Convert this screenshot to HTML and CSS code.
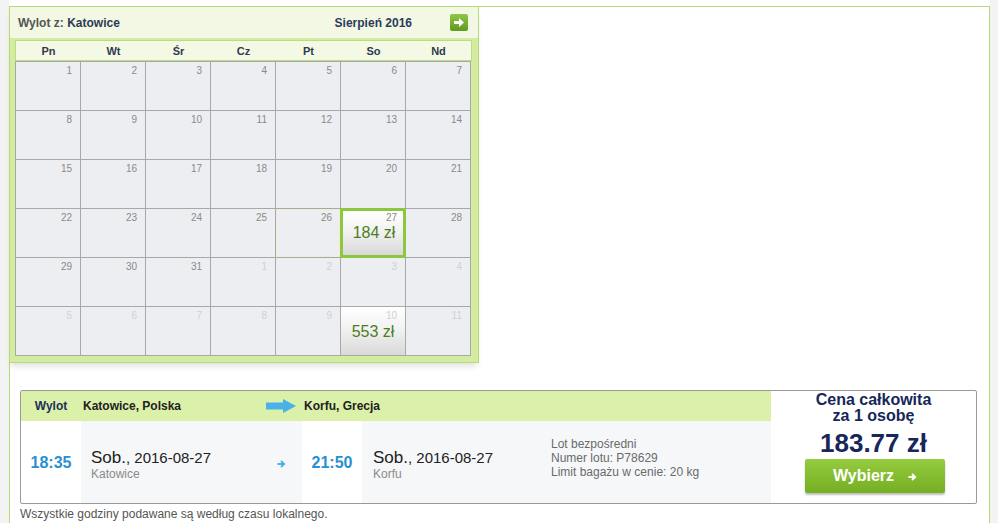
FILE: index.html
```html
<!DOCTYPE html>
<html lang="pl">
<head>
<meta charset="utf-8">
<title>Wylot</title>
<link rel="stylesheet" href="styles.css">
</head>
<body>
<div class="page">
  <div class="frame">
    <div class="calendar">
      <div class="cal-head">
        <div class="from"><span class="from-label">Wylot z:</span> <span class="from-city">Katowice</span></div>
        <div class="month">Sierpień 2016</div>
        <div class="next-btn"><svg width="18" height="17" viewBox="0 0 18 17"><polygon points="4,7 9,7 9,4 14,8.5 9,13 9,10 4,10" fill="#fff"/></svg></div>
      </div>
      <div class="cal-body">
        <div class="daynames">
          <div>Pn</div><div>Wt</div><div>Śr</div><div>Cz</div><div>Pt</div><div>So</div><div>Nd</div>
        </div>
        <div class="grid">
          <div class="cell"><span class="num">1</span></div>
          <div class="cell"><span class="num">2</span></div>
          <div class="cell"><span class="num">3</span></div>
          <div class="cell"><span class="num">4</span></div>
          <div class="cell"><span class="num">5</span></div>
          <div class="cell"><span class="num">6</span></div>
          <div class="cell"><span class="num">7</span></div>
          <div class="cell"><span class="num">8</span></div>
          <div class="cell"><span class="num">9</span></div>
          <div class="cell"><span class="num">10</span></div>
          <div class="cell"><span class="num">11</span></div>
          <div class="cell"><span class="num">12</span></div>
          <div class="cell"><span class="num">13</span></div>
          <div class="cell"><span class="num">14</span></div>
          <div class="cell"><span class="num">15</span></div>
          <div class="cell"><span class="num">16</span></div>
          <div class="cell"><span class="num">17</span></div>
          <div class="cell"><span class="num">18</span></div>
          <div class="cell"><span class="num">19</span></div>
          <div class="cell"><span class="num">20</span></div>
          <div class="cell"><span class="num">21</span></div>
          <div class="cell"><span class="num">22</span></div>
          <div class="cell"><span class="num">23</span></div>
          <div class="cell"><span class="num">24</span></div>
          <div class="cell"><span class="num">25</span></div>
          <div class="cell hover"><span class="num">26</span></div>
          <div class="cell price selected"><span class="num">27</span><span class="amount">184 zł</span></div>
          <div class="cell"><span class="num">28</span></div>
          <div class="cell"><span class="num">29</span></div>
          <div class="cell"><span class="num">30</span></div>
          <div class="cell"><span class="num">31</span></div>
          <div class="cell other"><span class="num">1</span></div>
          <div class="cell other"><span class="num">2</span></div>
          <div class="cell other"><span class="num">3</span></div>
          <div class="cell other"><span class="num">4</span></div>
          <div class="cell other"><span class="num">5</span></div>
          <div class="cell other"><span class="num">6</span></div>
          <div class="cell other"><span class="num">7</span></div>
          <div class="cell other"><span class="num">8</span></div>
          <div class="cell other"><span class="num">9</span></div>
          <div class="cell other price"><span class="num">10</span><span class="amount">553 zł</span></div>
          <div class="cell other"><span class="num">11</span></div>
        </div>
      </div>
    </div>

    <div class="flight">
      <div class="flight-main">
        <div class="flight-head">
          <div class="col-time head-label">Wylot</div>
          <div class="col-date head-city">
            <span>Katowice, Polska</span>
            <svg class="big-arrow" width="30" height="14" viewBox="0 0 30 14"><polygon points="0,3.5 17,3.5 17,0 30,7 17,14 17,10.5 0,10.5" fill="#4ab2e6"/></svg>
          </div>
          <div class="col-time2 head-city dest">Korfu, Grecja</div>
        </div>
        <div class="flight-body">
          <div class="col-time time">18:35</div>
          <div class="col-date grey">
            <div class="when">
              <div class="date"><span class="day">Sob.</span>, 2016-08-27</div>
              <div class="place">Katowice</div>
            </div>
            <svg class="small-arrow" width="9" height="8" viewBox="0 0 9 8"><path d="M0.5 4 H7 M4 1 L7.2 4 L4 7" fill="none" stroke="#4ab2e6" stroke-width="1.8"/></svg>
          </div>
          <div class="col-time time">21:50</div>
          <div class="col-rest grey">
            <div class="when when2">
              <div class="date"><span class="day">Sob.</span>, 2016-08-27</div>
              <div class="place">Korfu</div>
            </div>
            <div class="info">
              <div>Lot bezpośredni</div>
              <div>Numer lotu: P78629</div>
              <div>Limit bagażu w cenie: 20 kg</div>
            </div>
          </div>
        </div>
      </div>
      <div class="price-col">
        <div class="price-title">Cena całkowita<br>za 1 osobę</div>
        <div class="price-total">183.77 zł</div>
        <div class="choose">Wybierz <svg class="choose-arrow" width="9" height="8" viewBox="0 0 9 8"><path d="M0.5 4 H7 M4 1 L7.2 4 L4 7" fill="none" stroke="#fff" stroke-width="1.8"/></svg></div>
      </div>
    </div>
    <div class="note">Wszystkie godziny podawane są według czasu lokalnego.</div>
  </div>
</div>
</body>
</html>
```

FILE: styles.css
```css
* { box-sizing: border-box; }
html, body { margin: 0; padding: 0; }
body {
  background: #f3f3f3;
  font-family: "Liberation Sans", Arial, sans-serif;
  height: 523px;
  overflow: hidden;
}
.page {
  margin-left: 9px;
  width: 981px;
  height: 523px;
  background: #fff;
  padding-top: 6px;
}
.frame {
  border: 1px solid #b7d977;
  border-bottom: none;
  height: 517px;
}

/* calendar */
.calendar {
  width: 470px;
  margin-top: -1px;
  margin-left: -1px;
  background: #d4eca0;
  border: 1px solid #b7d977;
  box-shadow: 0 5px 6px -2px rgba(0, 0, 0, 0.13);
}
.cal-head {
  height: 31px;
  background: #f2f8e3;
  display: flex;
  align-items: center;
  padding: 0 10px 0 8px;
  font-size: 12px;
  font-weight: bold;
}
.from { flex: 1; color: #555; }
.from-city { color: #2d3a55; }
.month { color: #2b3a5c; margin-right: 38px; }
.next-btn {
  width: 18px;
  height: 17px;
  border-radius: 2px;
  background: linear-gradient(#8fc743, #5f9b22);
  display: flex;
}
.cal-body {
  padding: 2px 6px 6px 5px;
}
.daynames {
  display: grid;
  grid-template-columns: repeat(7, 65px);
  height: 21px;
  border: 1px solid #bcdc83;
  background: #f3f9e4;
  align-items: center;
  font-size: 11px;
  font-weight: bold;
  color: #2f3a4d;
  text-align: center;
}
.grid {
  display: grid;
  grid-template-columns: repeat(7, 65px);
  grid-auto-rows: 49px;
  width: 456px;
  border-left: 1px solid #a6a8aa;
  border-top: 1px solid #a6a8aa;
  background: #eceef1;
}
.cell {
  border-right: 1px solid #a6a8aa;
  border-bottom: 1px solid #a6a8aa;
  position: relative;
  display: flex;
  flex-direction: column;
  align-items: flex-end;
  padding: 3px 8px 0 0;
}
.num {
  font-size: 10px;
  color: #8a8a8a;
  line-height: 12px;
}
.other .num { color: #cfd1d3; }
.hover { box-shadow: inset 0 0 0 1px #f1edcf; }
.price {
  background: linear-gradient(#ffffff, #f2f2f2 45%, #d9d9d9);
}
.price .amount {
  align-self: center;
  font-size: 16px;
  color: #4c7d24;
  margin-top: 1px;
  padding-left: 8px;
}
.selected {
  border: 3px solid #8dc63f;
  margin: -1px 0 0 -1px;
  padding: 1px 6px 0 0;
}
.selected .amount { margin-top: 0; }

/* flight */
.flight {
  margin: 27px 0 0 10px;
  width: 957px;
  height: 114px;
  border: 1px solid #9a9a9a;
  border-radius: 2px;
  display: flex;
  position: relative;
}
.flight-main { width: 750px; display: flex; flex-direction: column; }
.flight-head {
  height: 30px;
  background: #dbf0a9;
  display: flex;
  align-items: center;
  font-size: 12px;
  font-weight: bold;
}
.col-time { width: 60px; text-align: center; flex-shrink: 0; }
.col-date { width: 221px; display: flex; align-items: center; flex-shrink: 0; }
.col-time2 { flex: 1; }
.head-label { color: #1e2d5a; }
.head-city { color: #222; }
.flight-head .col-date { padding-left: 2px; }
.big-arrow { margin-left: auto; margin-right: 6px; }
.dest { padding-left: 2px; }
.flight-body {
  flex: 1;
  display: flex;
}
.time {
  display: flex;
  align-items: center;
  justify-content: center;
  font-size: 16px;
  font-weight: bold;
  color: #2a8fd1;
  padding-top: 1px;
}
.grey { background: #f6f7f9; }
.flight-body .col-date { padding-left: 10px; }
.col-rest { flex: 1; display: flex; align-items: center; padding-left: 11px; }
.when { padding-top: 5px; }
.when2 { width: 178px; }
.date { font-size: 15px; color: #222; line-height: 18px; }
.day { font-size: 17px; }
.place { font-size: 12px; color: #8a8a8a; line-height: 14px; }
.small-arrow {
  margin-left: auto;
  margin-right: 16px;
  margin-top: 4px;
}
.info {
  font-size: 12px;
  color: #6a6a6a;
  line-height: 14px;
  padding-bottom: 9px;
}
.price-col {
  width: 205px;
  text-align: center;
  color: #16275a;
  display: flex;
  flex-direction: column;
  align-items: center;
}
.price-title {
  font-size: 16px;
  font-weight: bold;
  line-height: 16px;
  margin-top: 1px;
}
.price-total {
  font-size: 26px;
  font-weight: bold;
  line-height: 30px;
  margin-top: 4px;
}
.choose {
  margin-top: 1px;
  width: 140px;
  height: 34px;
  margin-left: 3px;
  background: linear-gradient(#96cc3f, #74ae22);
  border-radius: 2px;
  box-shadow: 0 2px 2px rgba(0, 0, 0, 0.25);
  color: #fff;
  font-size: 16px;
  font-weight: bold;
  display: flex;
  align-items: center;
  justify-content: center;
  gap: 14px;
}
.choose-arrow { margin-top: 1px; }
.note {
  font-size: 12px;
  color: #555;
  margin: 3px 0 0 10px;
}
```
